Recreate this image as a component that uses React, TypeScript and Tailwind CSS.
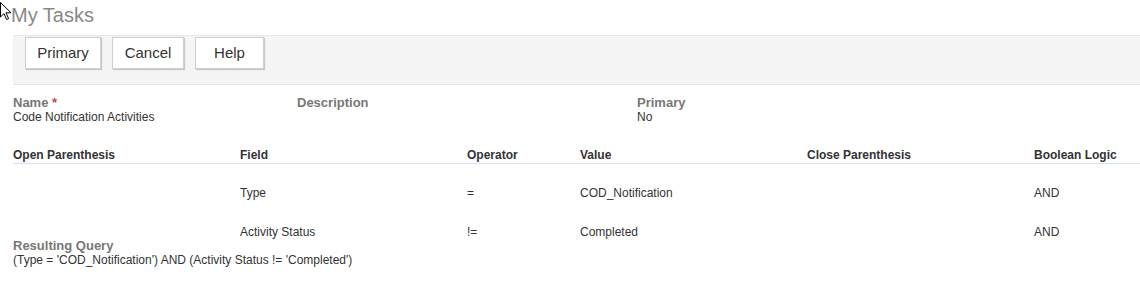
export default function App() {
  const header = ["Open Parenthesis", "Field", "Operator", "Value", "Close Parenthesis", "Boolean Logic"];
  const rows = [
    ["", "Type", "=", "COD_Notification", "", "AND"],
    ["", "Activity Status", "!=", "Completed", "", "AND"],
  ];
  const cols = "grid grid-cols-[227px_227px_113px_227px_227px_1fr]";

  return (
    <div className="w-[1140px] h-[284px] overflow-hidden bg-white font-['Liberation_Sans',Arial,sans-serif] text-[#333]">
      <div className="relative h-[35px] pl-[11px] pt-[2px]">
        <svg className="absolute left-0 top-[2px]" width="12" height="19" viewBox="0 0 12 19">
          <path d="M0.5 0.5 L0.5 15 L4 11.6 L6.6 17.6 L8.6 16.7 L6 10.8 L11 10.8 Z" fill="#fff" stroke="#000" strokeWidth="1" strokeLinejoin="miter" />
        </svg>
        <h1 className="text-[20px] leading-[26px] text-[#888]">My Tasks</h1>
      </div>

      <div className="ml-[13px] h-[50px] bg-[#f4f4f4] border-t border-t-[#e8e8e8] border-b border-b-[#e4e4e4] pl-[12px] pt-[1px] flex gap-[11px]">
        <button className="w-[76px] h-[32px] bg-white border border-[#cfcfcf] shadow-[1px_1px_1px_rgba(0,0,0,0.18)] text-[15px] text-[#333]">Primary</button>
        <button className="w-[72px] h-[32px] bg-white border border-[#cfcfcf] shadow-[1px_1px_1px_rgba(0,0,0,0.18)] text-[15px] text-[#333]">Cancel</button>
        <button className="w-[69px] h-[32px] bg-white border border-[#cfcfcf] shadow-[1px_1px_1px_rgba(0,0,0,0.18)] text-[15px] text-[#333]">Help</button>
      </div>

      <div className="ml-[13px] mt-[10px] grid grid-cols-[284px_340px_1fr] text-[12px] leading-[15px]">
        <div>
          <div className="font-bold text-[13px] text-[#777]">
            Name <span className="text-[#b94a48]">*</span>
          </div>
          <div>Code Notification Activities</div>
        </div>
        <div>
          <div className="font-bold text-[13px] text-[#777]">Description</div>
        </div>
        <div>
          <div className="font-bold text-[13px] text-[#777]">Primary</div>
          <div>No</div>
        </div>
      </div>

      <div className="ml-[13px] mt-[23px] text-[12px] leading-[15px]">
        <div className={`${cols} font-bold border-b border-b-[#d3e5f3]`}>
          {header.map((h) => (
            <div key={h}>{h}</div>
          ))}
        </div>
        {rows.map((r, i) => (
          <div key={i} className={`${cols} ${i === 0 ? "pt-[22px]" : "pt-[24px]"}`}>
            {r.map((c, j) => (
              <div key={j}>{c}</div>
            ))}
          </div>
        ))}
      </div>

      <div className="ml-[13px] -mt-[2px] text-[12px] leading-[15px]">
        <div className="font-bold text-[13px] text-[#777]">Resulting Query</div>
        <div>(Type = 'COD_Notification') AND (Activity Status != 'Completed')</div>
      </div>
    </div>
  );
}
